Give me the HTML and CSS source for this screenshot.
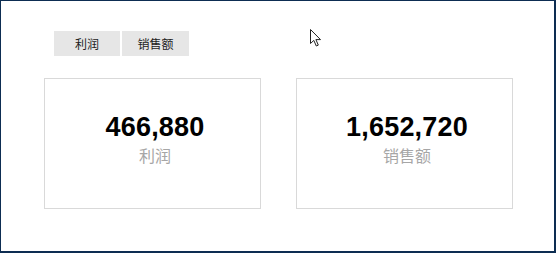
FILE: index.html
```html
<!DOCTYPE html>
<html>
  <head>
    <title>指标卡</title>
    <link rel="stylesheet" href="styles.css">
  </head>
  <body>
    <div class="frame">
      <div class="tabs">
        <button class="tab">利润</button>
        <button class="tab">销售额</button>
      </div>
      <div class="cards">
        <div class="card">
          <div class="value">466,880</div>
          <div class="label">利润</div>
        </div>
        <div class="card">
          <div class="value">1,652,720</div>
          <div class="label">销售额</div>
        </div>
      </div>
      <svg class="pointer" width="14" height="20" viewBox="0 0 14 20">
        <path d="M1.5 1.5 L1.5 15.5 L4.8 12.4 L7.3 18 L9.3 17.1 L6.9 11.6 L11.5 11.6 Z" fill="#fff" stroke="#222" stroke-width="1" stroke-linejoin="miter"/>
      </svg>
    </div>
  </body>
</html>
```
FILE: styles.css
```css
body {
  margin: 0;
  font-family: "Liberation Sans", "Noto Sans CJK SC", sans-serif;
}
.frame {
  position: relative;
  box-sizing: border-box;
  width: 556px;
  height: 253px;
  border: 1px solid #0d2d52;
  border-right-width: 2px;
  border-bottom-width: 2px;
  background: #fff;
  padding: 30px 0 0 43px;
}
.tabs {
  display: flex;
  gap: 2px;
  margin-left: 10px;
}
.tab {
  width: 66px;
  height: 25px;
  border: none;
  padding: 0;
  background-color: #e6e6e6;
  font-family: "Liberation Sans", "Noto Sans CJK SC", sans-serif;
  font-size: 12px;
  color: #222;
}
.tab + .tab {
  width: 67px;
}
.cards {
  display: flex;
  gap: 35px;
  margin-top: 22px;
}
.card {
  box-sizing: border-box;
  width: 217px;
  height: 131px;
  border: 1px solid #d9d9d9;
  display: flex;
  flex-direction: column;
  align-items: center;
  padding-top: 33px;
  padding-left: 5px;
}
.value {
  font-size: 27px;
  line-height: 31px;
  font-weight: bold;
  color: #000;
  letter-spacing: 0.2px;
}
.label {
  font-size: 16px;
  line-height: 22px;
  margin-top: 3px;
  color: #a6a6a6;
}
.pointer {
  position: absolute;
  left: 308px;
  top: 27px;
}
```
